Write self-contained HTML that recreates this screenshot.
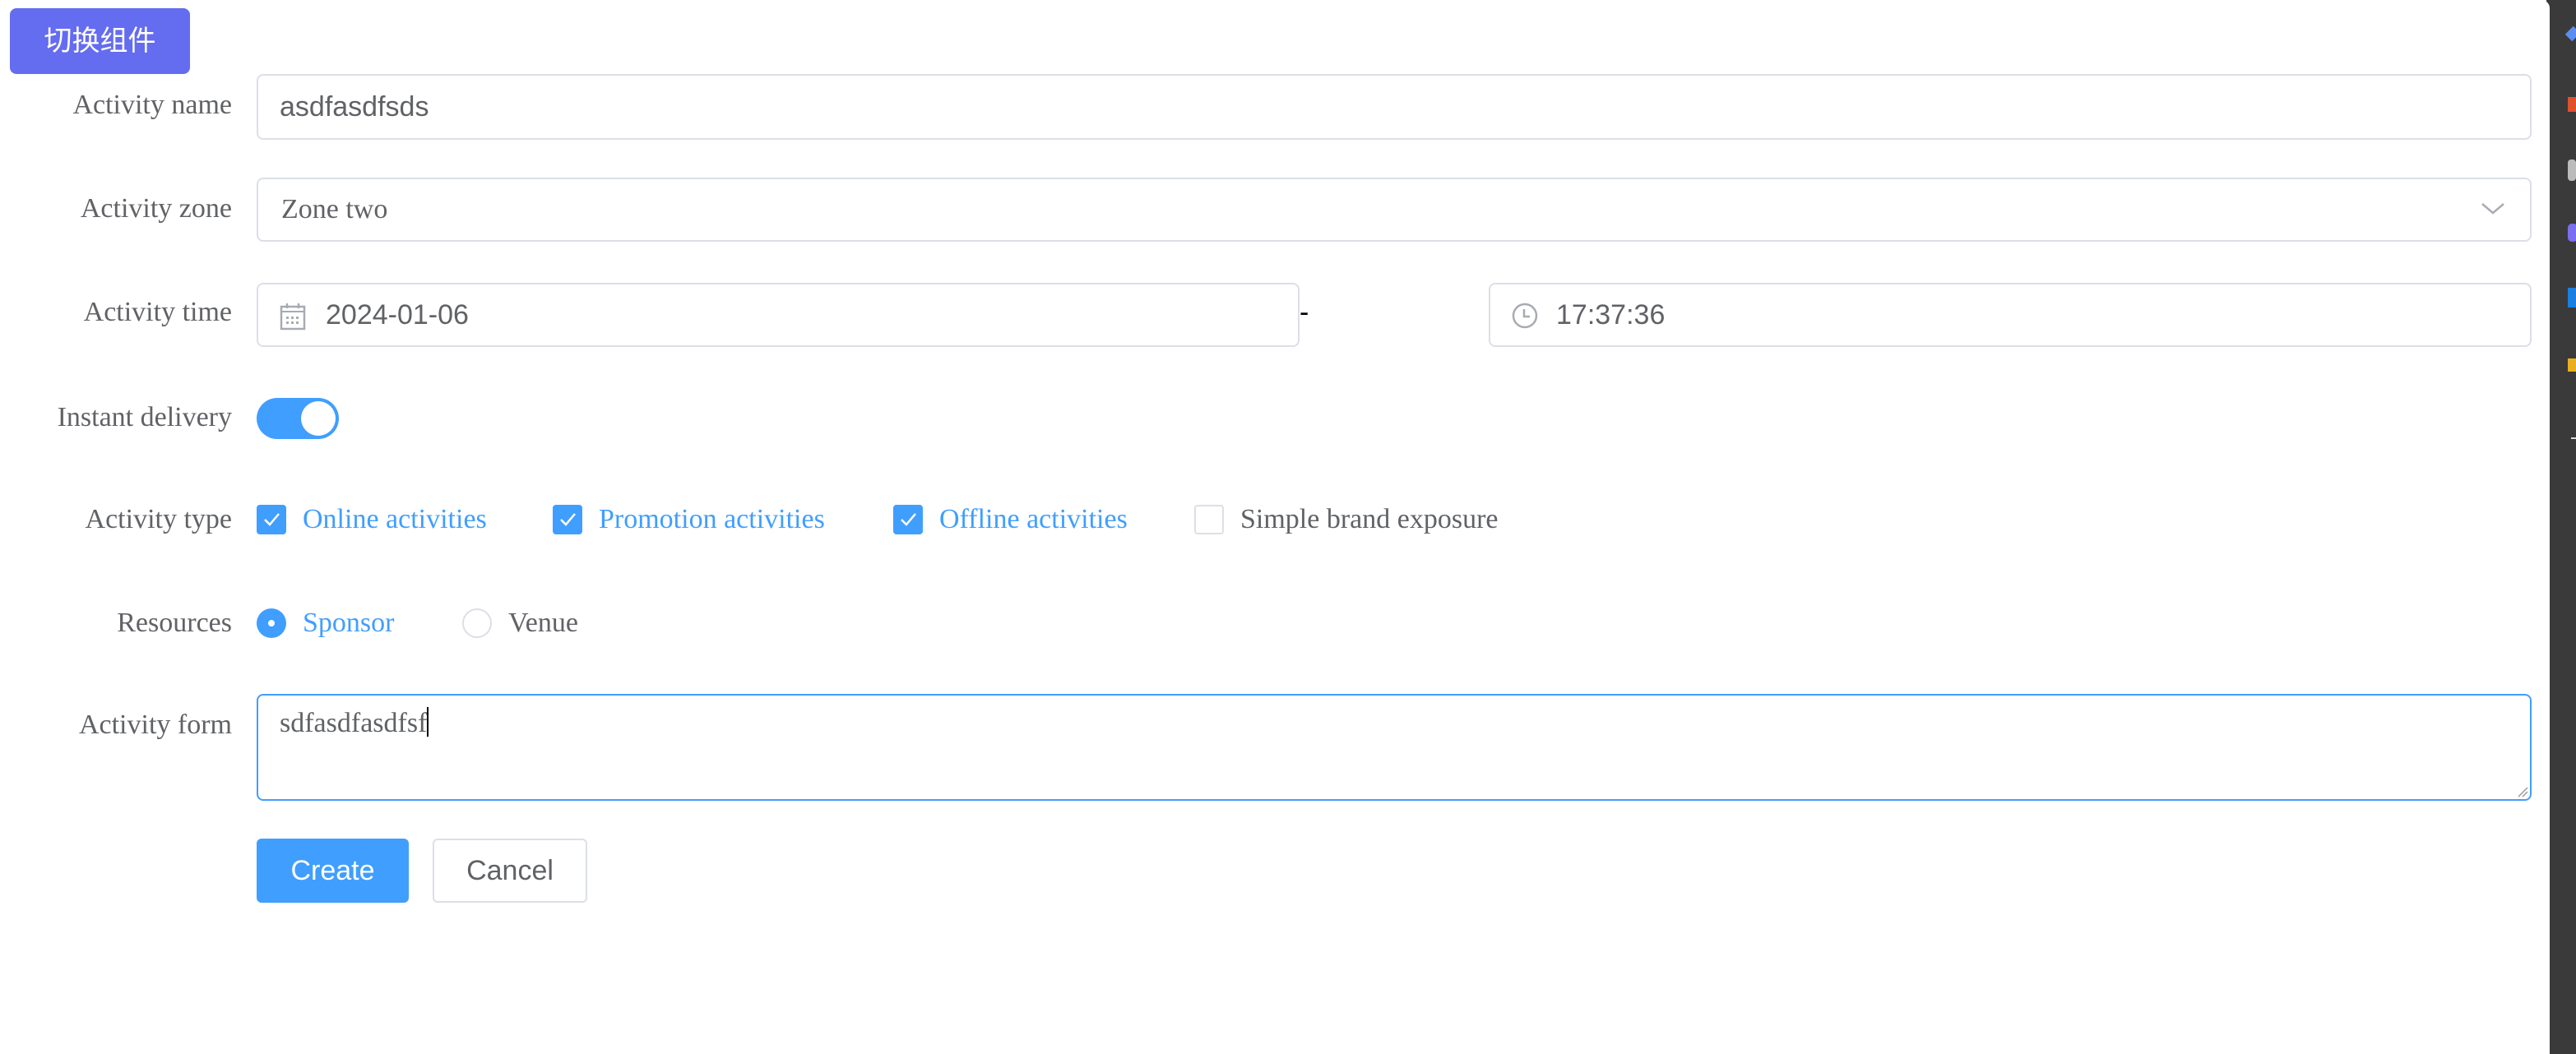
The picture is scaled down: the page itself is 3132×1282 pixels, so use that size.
<!DOCTYPE html>
<html><head><meta charset="utf-8"><style>
*{box-sizing:border-box;margin:0;padding:0}
body{width:3132px;height:1282px;background:#fff;position:relative;overflow:hidden;font-family:"Liberation Serif",serif;color:#606266}
.a{position:absolute}
.lbl{position:absolute;right:2850px;font-size:34px;line-height:40px;color:#606266;white-space:nowrap}
.inp{position:absolute;border:2px solid #dcdfe6;border-radius:8px;background:#fff}
.sans{font-family:"Liberation Sans",sans-serif}
.cb{position:absolute;width:36px;height:36px;border-radius:4px;background:#409eff}
.cb svg{position:absolute;left:0;top:0}
.ct{position:absolute;font-size:34px;line-height:40px;color:#409eff;white-space:nowrap}
</style></head><body>
<div class="a" style="left:12px;top:10px;width:219px;height:80px;background:#646cf0;border-radius:8px;color:#fff;font:34px/80px 'Liberation Sans','Noto Sans CJK SC',sans-serif;text-align:center">切换组件</div>

<div class="lbl" style="top:108px">Activity name</div>
<div class="inp sans" style="left:312px;top:90px;width:2766px;height:80px;font-size:34px;line-height:76px;padding-left:26px;color:#606266">asdfasdfsds</div>

<div class="lbl" style="top:234px">Activity zone</div>
<div class="inp" style="left:312px;top:216px;width:2766px;height:78px;font-size:34px;line-height:74px;padding-left:28px">Zone two
<svg class="a" style="right:30px;top:26px" width="30" height="20" viewBox="0 0 30 20"><path d="M2 4 L15 15 L28 4" stroke="#a8abb2" stroke-width="2.5" fill="none"/></svg></div>

<div class="lbl" style="top:360px">Activity time</div>
<div class="inp sans" style="left:312px;top:344px;width:1268px;height:78px;font-size:34px;line-height:74px;padding-left:82px">2024-01-06
<svg class="a" style="left:26px;top:22px" width="32" height="34" viewBox="0 0 32 34"><rect x="2" y="5" width="28" height="27" fill="none" stroke="#a8abb2" stroke-width="2.5"/><line x1="2" y1="11" x2="30" y2="11" stroke="#a8abb2" stroke-width="2"/><line x1="9" y1="1" x2="9" y2="7" stroke="#a8abb2" stroke-width="2.5"/><line x1="23" y1="1" x2="23" y2="7" stroke="#a8abb2" stroke-width="2.5"/><g fill="#a8abb2"><rect x="8" y="17" width="3" height="3"/><rect x="14" y="17" width="3" height="3"/><rect x="20" y="17" width="3" height="3"/><rect x="8" y="23" width="3" height="3"/><rect x="14" y="23" width="3" height="3"/><rect x="20" y="23" width="3" height="3"/></g></svg></div>
<div class="a sans" style="left:1580px;top:360px;font-size:34px;line-height:40px;color:#000">-</div>
<div class="inp sans" style="left:1810px;top:344px;width:1268px;height:78px;font-size:34px;line-height:74px;padding-left:80px">17:37:36
<svg class="a" style="left:26px;top:22px" width="32" height="32" viewBox="0 0 32 32"><circle cx="16" cy="16" r="14" fill="none" stroke="#a8abb2" stroke-width="2.5"/><path d="M15 8 V17 H22" stroke="#a8abb2" stroke-width="2.5" fill="none"/></svg></div>

<div class="lbl" style="top:488px">Instant delivery</div>
<div class="a" style="left:312px;top:484px;width:100px;height:50px;border-radius:25px;background:#409eff"><div class="a" style="right:4px;top:4px;width:42px;height:42px;border-radius:50%;background:#fff"></div></div>

<div class="lbl" style="top:612px">Activity type</div>
<div class="cb" style="left:312px;top:614px"><svg width="36" height="36"><path d="M10 18 L16 24 L27 11" stroke="#fff" stroke-width="2.5" fill="none"/></svg></div>
<div class="ct" style="left:368px;top:612px">Online activities</div>
<div class="cb" style="left:672px;top:614px"><svg width="36" height="36"><path d="M10 18 L16 24 L27 11" stroke="#fff" stroke-width="2.5" fill="none"/></svg></div>
<div class="ct" style="left:728px;top:612px">Promotion activities</div>
<div class="cb" style="left:1086px;top:614px"><svg width="36" height="36"><path d="M10 18 L16 24 L27 11" stroke="#fff" stroke-width="2.5" fill="none"/></svg></div>
<div class="ct" style="left:1142px;top:612px">Offline activities</div>
<div class="a" style="left:1452px;top:614px;width:36px;height:36px;border:2px solid #dcdfe6;border-radius:4px"></div>
<div class="ct" style="left:1508px;top:612px;color:#606266">Simple brand exposure</div>

<div class="lbl" style="top:738px">Resources</div>
<div class="a" style="left:312px;top:740px;width:36px;height:36px;border-radius:50%;background:#409eff"><div class="a" style="left:14px;top:14px;width:8px;height:8px;border-radius:50%;background:#fff"></div></div>
<div class="ct" style="left:368px;top:738px">Sponsor</div>
<div class="a" style="left:562px;top:740px;width:36px;height:36px;border-radius:50%;border:2px solid #dcdfe6"></div>
<div class="ct" style="left:618px;top:738px;color:#606266">Venue</div>

<div class="lbl" style="top:862px">Activity form</div>
<div class="a" style="left:312px;top:844px;width:2766px;height:130px;border:2px solid #409eff;border-radius:8px;font-size:34px;line-height:40px;padding:14px 26px">sdfasdfasdfsf<span style="display:inline-block;width:2px;height:36px;background:#000;vertical-align:-6px"></span>
<svg class="a" style="right:2px;bottom:2px" width="14" height="14"><path d="M2 13 L13 2 M7 13 L13 7" stroke="#999" stroke-width="1.5"/></svg></div>

<div class="a sans" style="left:312px;top:1020px;width:185px;height:78px;background:#409eff;border-radius:6px;color:#fff;font-size:34px;line-height:78px;text-align:center">Create</div>
<div class="a sans" style="left:526px;top:1020px;width:188px;height:78px;border:2px solid #dcdfe6;border-radius:6px;color:#606266;font-size:34px;line-height:74px;text-align:center">Cancel</div>

<div class="a" style="left:3096px;top:0;width:36px;height:1282px;background:#3a3a3a"></div>
<div class="a" style="left:3090px;top:0;width:10px;height:1282px;background:#fff;border-radius:0 10px 0 0"></div>
<div class="a" style="left:3122px;top:34px;width:12px;height:14px;background:#5b8ef0;transform:rotate(45deg)"></div>
<div class="a" style="left:3122px;top:118px;width:12px;height:18px;background:#e0502a"></div>
<div class="a" style="left:3122px;top:194px;width:10px;height:26px;background:#bbb;border-radius:4px"></div>
<div class="a" style="left:3122px;top:272px;width:12px;height:22px;background:#7a6ff0;border-radius:5px"></div>
<div class="a" style="left:3122px;top:350px;width:12px;height:24px;background:#1a7fe0"></div>
<div class="a" style="left:3122px;top:436px;width:12px;height:16px;background:#e8b020"></div>
<div class="a" style="left:3126px;top:532px;width:8px;height:2px;background:#ddd"></div>
</body></html>
